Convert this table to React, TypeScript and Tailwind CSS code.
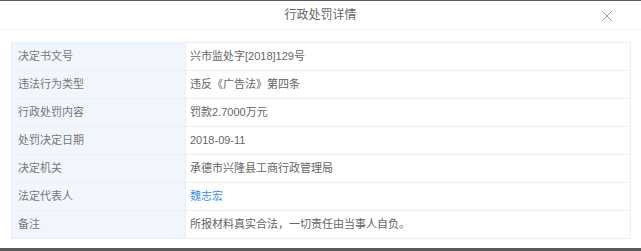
import { X } from 'lucide-react'

const rows: { label: string; value: string; link?: boolean }[] = [
  { label: '决定书文号', value: '兴市监处字[2018]129号' },
  { label: '违法行为类型', value: '违反《广告法》第四条' },
  { label: '行政处罚内容', value: '罚款2.7000万元' },
  { label: '处罚决定日期', value: '2018-09-11' },
  { label: '决定机关', value: '承德市兴隆县工商行政管理局' },
  { label: '法定代表人', value: '魏志宏', link: true },
  { label: '备注', value: '所报材料真实合法，一切责任由当事人自负。' },
]

export default function App() {
  return (
    <div
      className="flex h-[251px] w-[641px] flex-col overflow-hidden bg-[#5a5a5a]"
      style={{ fontFamily: '"Liberation Sans", "Noto Sans CJK SC", sans-serif' }}
    >
      <div className="mt-[1px] h-[247px] bg-white">
        {/* 标题栏 */}
        <div className="relative flex h-[29px] items-center justify-center border-b border-[#f2f2f2]">
          <span className="text-[12px] text-[#666]">行政处罚详情</span>
          <X className="absolute right-[25px] top-[6px] h-[18px] w-[18px] text-[#888]" strokeWidth={1.1} />
        </div>

        <div className="px-[11px] pt-[12px]">
          <table className="w-[620px] border-collapse text-[11px]">
            <tbody>
              {rows.map(row => (
                <tr key={row.label} className="h-[28px]">
                  <td className="w-[174px] border border-[#e9eff6] bg-[#f1f6fc] pl-[6px] text-[#777]">
                    {row.label}
                  </td>
                  <td className={`border border-[#e9eff6] pl-[4px] ${row.link ? 'text-[#3b8fe8]' : 'text-[#666]'}`}>
                    {row.value}
                  </td>
                </tr>
              ))}
            </tbody>
          </table>
        </div>
      </div>
    </div>
  )
}
